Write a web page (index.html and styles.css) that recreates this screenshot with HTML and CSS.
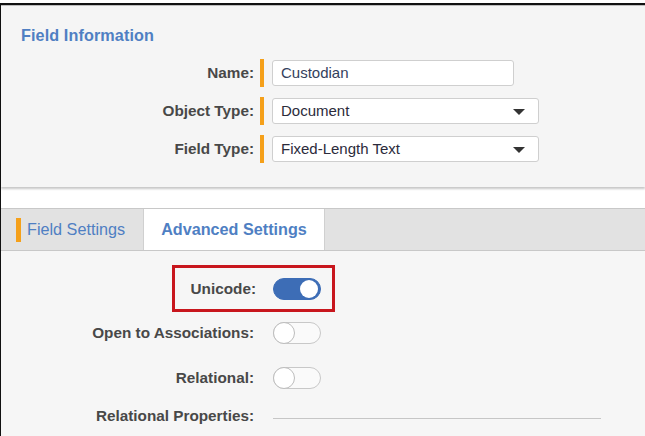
FILE: index.html
```html
<!DOCTYPE html>
<html>
<head>
<meta charset="utf-8">
<link rel="stylesheet" href="styles.css">
</head>
<body>
<div class="frame">
  <section class="info">
    <h2 class="info-title">Field Information</h2>
    <div class="form-row">
      <label class="form-label">Name:</label>
      <span class="req"></span>
      <div class="input name-input">Custodian</div>
    </div>
    <div class="form-row">
      <label class="form-label">Object Type:</label>
      <span class="req"></span>
      <div class="input select">Document<span class="caret"></span></div>
    </div>
    <div class="form-row">
      <label class="form-label">Field Type:</label>
      <span class="req"></span>
      <div class="input select">Fixed-Length Text<span class="caret"></span></div>
    </div>
  </section>
  <div class="gap"></div>
  <nav class="tabs">
    <div class="tab tab-inactive"><span class="tab-req"></span>Field Settings</div>
    <div class="tab tab-active">Advanced Settings</div>
  </nav>
  <section class="settings">
    <div class="set-row first">
      <span class="set-label unicode">Unicode:</span>
      <span class="toggle on"><span class="knob"></span></span>
      <div class="highlight"></div>
    </div>
    <div class="set-row">
      <span class="set-label">Open to Associations:</span>
      <span class="toggle"><span class="knob"></span></span>
    </div>
    <div class="set-row">
      <span class="set-label">Relational:</span>
      <span class="toggle"><span class="knob"></span></span>
    </div>
    <div class="set-row props">
      <span class="set-label">Relational Properties:</span>
      <span class="rule"></span>
    </div>
  </section>
</div>
</body>
</html>
```

FILE: styles.css
```css
* { box-sizing: border-box; }
html, body {
  margin: 0;
  padding: 0;
  background: #ffffff;
  font-family: "Liberation Sans", Arial, sans-serif;
  overflow: hidden;
}
body { padding-top: 3px; }
.frame {
  border-top: 2px solid #111;
  border-left: 1px solid #111;
  height: 433px;
  background: #f6f6f6;
  display: flex;
  flex-direction: column;
}
.frame > * { flex-shrink: 0; }
.info {
  background: #f5f5f5;
  border-top: 1px solid #bdbdbd;
  height: 182px;
  padding-top: 19px;
  box-shadow: 0 2px 2px rgba(0,0,0,0.22);
  position: relative;
  z-index: 1;
}
.info-title {
  margin: 0 0 9px 20px;
  font-size: 16.2px;
  line-height: 20px;
  font-weight: bold;
  color: #4f7fc3;
  letter-spacing: 0.1px;
}
.form-row {
  display: flex;
  align-items: center;
  height: 38px;
}
.form-label {
  width: 253px;
  text-align: right;
  font-size: 15.3px;
  font-weight: bold;
  color: #484848;
}
.req {
  width: 4px;
  height: 28px;
  margin-left: 6px;
  background: #f5a01a;
}
.input {
  margin-left: 8px;
  height: 26px;
  background: #fff;
  border: 1px solid #cfcfcf;
  border-radius: 3px;
  font-size: 15px;
  line-height: 24px;
  padding-left: 8px;
  color: #2b2b3b;
  position: relative;
}
.name-input { width: 242px; color: #33415c; }
.select { width: 267px; }
.caret {
  position: absolute;
  right: 13px;
  top: 10px;
  width: 0;
  height: 0;
  border-left: 6px solid transparent;
  border-right: 6px solid transparent;
  border-top: 6px solid #333;
}
.gap {
  height: 21px;
  background: #fff;
}
.tabs {
  display: flex;
  height: 43px;
  background: #e2e2e2;
  border-top: 1px solid #c8c8c8;
  border-bottom: 1px solid #c8c8c8;
}
.tab {
  font-size: 16.2px;
  line-height: 41px;
  color: #4f7fc3;
}
.tab-inactive {
  width: 142px;
  padding-left: 15px;
  display: flex;
  align-items: center;
}
.tab-req {
  width: 5px;
  height: 24px;
  background: #f5a01a;
  margin-right: 6px;
}
.tab-active {
  width: 182px;
  background: #fff;
  border-left: 1px solid #d0d0d0;
  border-right: 1px solid #d0d0d0;
  font-weight: bold;
  text-align: center;
}
.settings {
  flex: 1 1 auto;
  min-height: 0;
  background: #f6f6f6;
  padding-top: 27px;
}
.set-row {
  display: flex;
  align-items: center;
  height: 22px;
  margin-bottom: 23px;
  position: relative;
}
.set-row.first { margin-bottom: 22px; }
.set-row.props { margin-top: -7px; }
.set-label {
  width: 253px;
  text-align: right;
  font-size: 15.3px;
  font-weight: bold;
  color: #484848;
}
.set-label.unicode { width: 255px; }
.toggle {
  margin-left: 19px;
  width: 48px;
  height: 22px;
  border-radius: 11px;
  background: #fafafa;
  border: 1px solid #c8c8c8;
  position: relative;
  display: block;
}
.set-label.unicode + .toggle { margin-left: 17px; }
.toggle .knob {
  position: absolute;
  left: -1px;
  top: -1px;
  width: 22px;
  height: 22px;
  border-radius: 50%;
  background: #fff;
  border: 1px solid #bdbdbd;
}
.toggle.on {
  background: #3d6db6;
  border-color: #3d6db6;
}
.toggle.on .knob {
  left: auto;
  right: 2px;
  top: 1px;
  width: 18px;
  height: 18px;
  border: none;
}
.rule {
  margin-left: 19px;
  margin-top: 4px;
  width: 328px;
  height: 1px;
  background: #c6c6c6;
}
.highlight {
  position: absolute;
  left: 171px;
  top: -13px;
  width: 163px;
  height: 47px;
  border: 3px solid #c8161d;
}
```
